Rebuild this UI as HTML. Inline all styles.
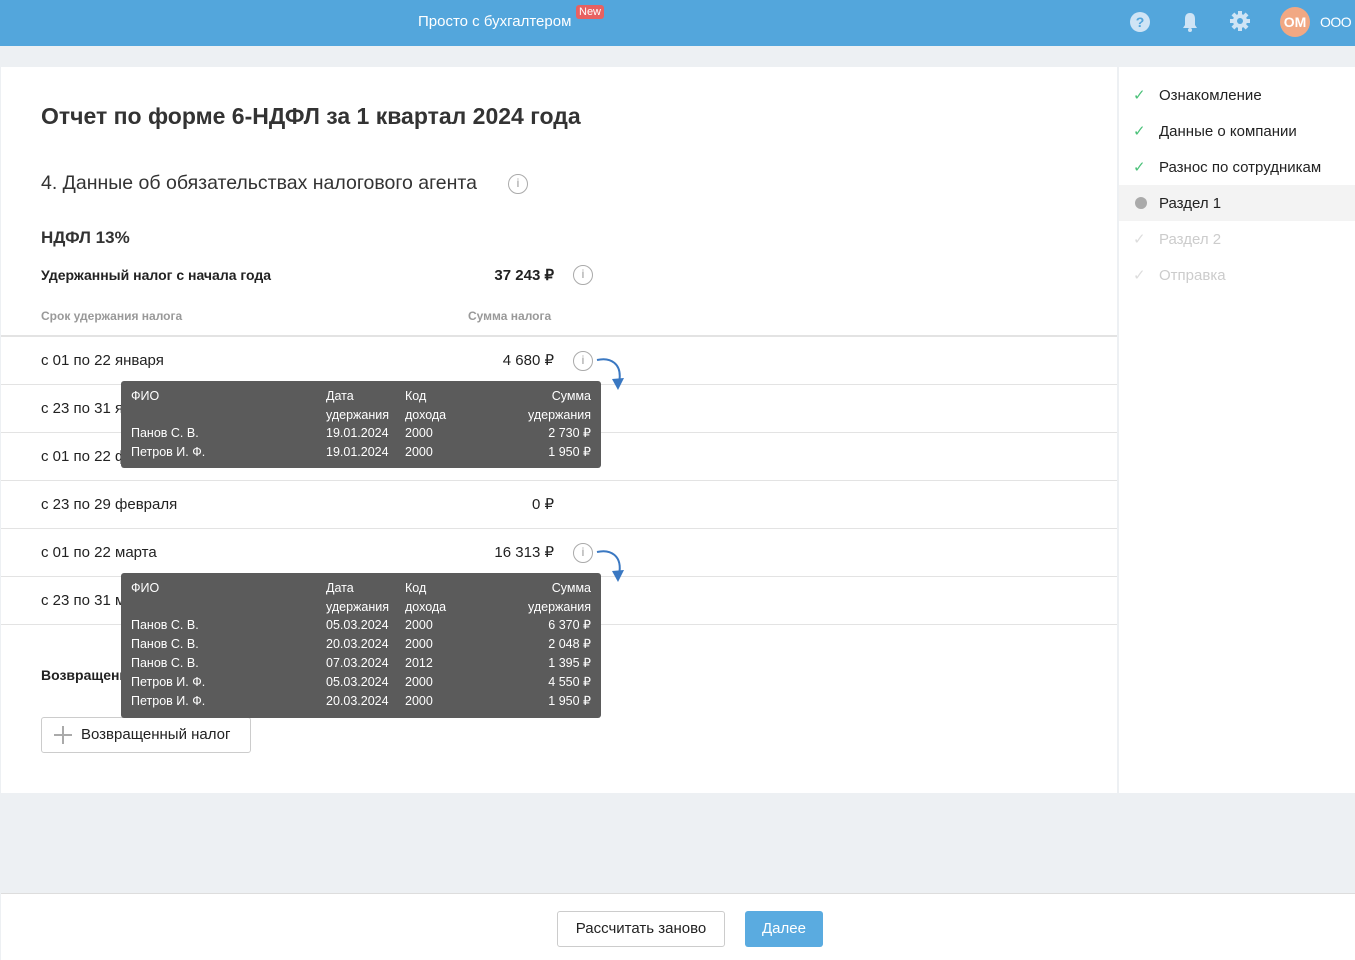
<!DOCTYPE html>
<html><head><meta charset="utf-8"><style>
*{box-sizing:border-box;margin:0;padding:0}
body{width:1355px;height:960px;background:#edf0f3;font-family:"Liberation Sans",sans-serif;color:#222;position:relative;overflow:hidden}
.hdr{position:absolute;left:0;top:0;width:1355px;height:46px;background:#53a6dc;color:#fff}
.abs{position:absolute}
.card{position:absolute;left:1px;top:67px;width:1116px;height:726px;background:#fff}
.side{position:absolute;left:1119px;top:67px;width:236px;height:726px;background:#fff}
.line{position:absolute;left:1px;width:1116px;height:1px;background:#e3e3e3}
.rt{position:absolute;left:41px;font-size:15px}
.amt{position:absolute;right:801px;font-size:15px;text-align:right}
.tip{position:absolute;left:121px;width:480px;background:#5b5b5b;border-radius:3px;color:#fff;font-size:12.5px;line-height:19px}
.tip div{position:absolute}
.info{position:absolute;width:20px;height:20px;border:1.5px solid #aaa;border-radius:50%;color:#999;font-size:12px;text-align:center;line-height:17px;font-family:"Liberation Sans",sans-serif}
.st{position:absolute;left:1159px;font-size:15px}
.ck{position:absolute;left:1133px;font-size:15px}
</style></head><body>
<div class="hdr">
<div class="abs" style="left:418px;top:13px;font-size:15px">Просто с бухгалтером</div>
<div class="abs" style="left:576px;top:5px;background:#e86161;border-radius:3px;font-size:11px;padding:1px 3px">New</div>
<svg class="abs" style="left:1129px;top:11px" width="22" height="22"><circle cx="11" cy="11" r="10" fill="#cfe4f5"/><text x="11" y="16" font-size="14" font-weight="bold" text-anchor="middle" fill="#53a6dc" font-family="Liberation Sans">?</text></svg>
<svg class="abs" style="left:1180px;top:11px" width="20" height="22"><path d="M10 2c-4 0-5 3-5 6v6l-2 3h14l-2-3V8c0-3-1-6-5-6z" fill="#cfe4f5"/><circle cx="10" cy="19" r="2" fill="#cfe4f5"/></svg>
<svg class="abs" style="left:1229px;top:10px" width="22" height="22"><g fill="#cfe4f5"><circle cx="11" cy="11" r="7"/><rect x="9" y="1" width="4" height="20"/><rect x="1" y="9" width="20" height="4"/><rect x="9" y="1" width="4" height="20" transform="rotate(45 11 11)"/><rect x="9" y="1" width="4" height="20" transform="rotate(-45 11 11)"/></g><circle cx="11" cy="11" r="3" fill="#53a6dc"/></svg>
<div class="abs" style="left:1280px;top:7px;width:30px;height:30px;border-radius:50%;background:#f1a883;font-size:14px;font-weight:bold;text-align:center;line-height:30px">ОМ</div>
<div class="abs" style="left:1320px;top:14px;font-size:14px;letter-spacing:-0.5px">ООО</div>
</div>
<div class="card"></div>
<div class="side"></div>
<div class="abs" style="left:1119px;top:185px;width:236px;height:36px;background:#f3f3f3"></div>
<div class="ck" style="top:86px;color:#4cc27a">✓</div><div class="st" style="top:87px">Ознакомление</div>
<div class="ck" style="top:122px;color:#4cc27a">✓</div><div class="st" style="top:123px">Данные о компании</div>
<div class="ck" style="top:158px;color:#4cc27a">✓</div><div class="st" style="top:159px">Разнос по сотрудникам</div>
<div class="abs" style="left:1135px;top:197px;width:12px;height:12px;border-radius:50%;background:#aaa"></div><div class="st" style="top:195px">Раздел 1</div>
<div class="ck" style="top:230px;color:#ddd">✓</div><div class="st" style="top:231px;color:#ccc">Раздел 2</div>
<div class="ck" style="top:266px;color:#ddd">✓</div><div class="st" style="top:267px;color:#ccc">Отправка</div>

<div class="abs" style="left:41px;top:103px;font-size:23px;font-weight:bold;color:#333">Отчет по форме 6-НДФЛ за 1 квартал 2024 года</div>
<div class="abs" style="left:41px;top:172px;font-size:19.5px;color:#333">4. Данные об обязательствах налогового агента</div>
<div class="info" style="left:508px;top:174px">i</div>
<div class="abs" style="left:41px;top:228px;font-size:17px;font-weight:bold;color:#333">НДФЛ 13%</div>
<div class="abs" style="left:41px;top:267px;font-size:14px;font-weight:bold">Удержанный налог с начала года</div>
<div class="amt" style="top:266px;font-weight:bold;font-size:15px">37 243 ₽</div>
<div class="info" style="left:573px;top:265px">i</div>
<div class="abs" style="left:41px;top:309px;font-size:12px;color:#999;font-weight:bold">Срок удержания налога</div>
<div class="abs" style="left:468px;top:309px;font-size:12px;color:#999;font-weight:bold">Сумма налога</div>
<div class="line" style="top:335px;height:2px"></div>
<div class="line" style="top:384px"></div><div class="line" style="top:432px"></div><div class="line" style="top:480px"></div><div class="line" style="top:528px"></div><div class="line" style="top:576px"></div><div class="line" style="top:624px"></div>
<div class="rt" style="top:352px">с 01 по 22 января</div><div class="amt" style="top:351px">4 680 ₽</div><div class="info" style="left:573px;top:351px">i</div>
<div class="rt" style="top:400px">с 23 по 31 января</div>
<div class="rt" style="top:448px">с 01 по 22 февраля</div>
<div class="rt" style="top:496px">с 23 по 29 февраля</div><div class="amt" style="top:495px">0 ₽</div>
<div class="rt" style="top:544px">с 01 по 22 марта</div><div class="amt" style="top:543px">16 313 ₽</div><div class="info" style="left:573px;top:543px">i</div>
<div class="rt" style="top:592px">с 23 по 31 марта</div>
<svg class="abs" style="left:595px;top:355px" width="35" height="40"><path d="M2 5 C15 2 28 8 24 28" fill="none" stroke="#3a78c2" stroke-width="2"/><path d="M17 24 L23 35 L29 23 Z" fill="#3a78c2"/></svg>
<svg class="abs" style="left:595px;top:547px" width="35" height="40"><path d="M2 5 C15 2 28 8 24 28" fill="none" stroke="#3a78c2" stroke-width="2"/><path d="M17 24 L23 35 L29 23 Z" fill="#3a78c2"/></svg>
<div class="abs" style="left:41px;top:667px;font-size:14px;font-weight:bold">Возвращенный налог</div>
<div class="abs" style="left:41px;top:717px;width:210px;height:36px;border:1px solid #ccc;border-radius:3px;font-size:15px;line-height:34px;padding-left:39px">Возвращенный налог</div>
<div class="abs" style="left:54px;top:734px;width:18px;height:2px;background:#aaa"></div><div class="abs" style="left:62px;top:726px;width:2px;height:18px;background:#aaa"></div>

<div class="tip" style="top:381px;height:87px">
<div style="left:10px;top:6px">ФИО</div><div style="left:205px;top:6px">Дата<br>удержания</div><div style="left:284px;top:6px">Код<br>дохода</div><div style="right:10px;top:6px;text-align:right">Сумма<br>удержания</div>
<div style="left:10px;top:43px">Панов С. В.<br>Петров И. Ф.</div><div style="left:205px;top:43px">19.01.2024<br>19.01.2024</div><div style="left:284px;top:43px">2000<br>2000</div><div style="right:10px;top:43px;text-align:right">2 730 ₽<br>1 950 ₽</div>
</div>
<div class="tip" style="top:573px;height:145px">
<div style="left:10px;top:6px">ФИО</div><div style="left:205px;top:6px">Дата<br>удержания</div><div style="left:284px;top:6px">Код<br>дохода</div><div style="right:10px;top:6px;text-align:right">Сумма<br>удержания</div>
<div style="left:10px;top:43px">Панов С. В.<br>Панов С. В.<br>Панов С. В.<br>Петров И. Ф.<br>Петров И. Ф.</div><div style="left:205px;top:43px">05.03.2024<br>20.03.2024<br>07.03.2024<br>05.03.2024<br>20.03.2024</div><div style="left:284px;top:43px">2000<br>2000<br>2012<br>2000<br>2000</div><div style="right:10px;top:43px;text-align:right">6 370 ₽<br>2 048 ₽<br>1 395 ₽<br>4 550 ₽<br>1 950 ₽</div>
</div>

<div class="abs" style="left:1px;top:893px;width:1354px;height:67px;background:#fff;border-top:1px solid #ddd"></div>
<div class="abs" style="left:557px;top:911px;width:168px;height:36px;border:1px solid #ccc;border-radius:3px;font-size:15px;text-align:center;line-height:34px">Рассчитать заново</div>
<div class="abs" style="left:745px;top:911px;width:78px;height:36px;background:#5aabe0;border-radius:3px;font-size:15px;color:#fff;text-align:center;line-height:36px">Далее</div>
</body></html>
